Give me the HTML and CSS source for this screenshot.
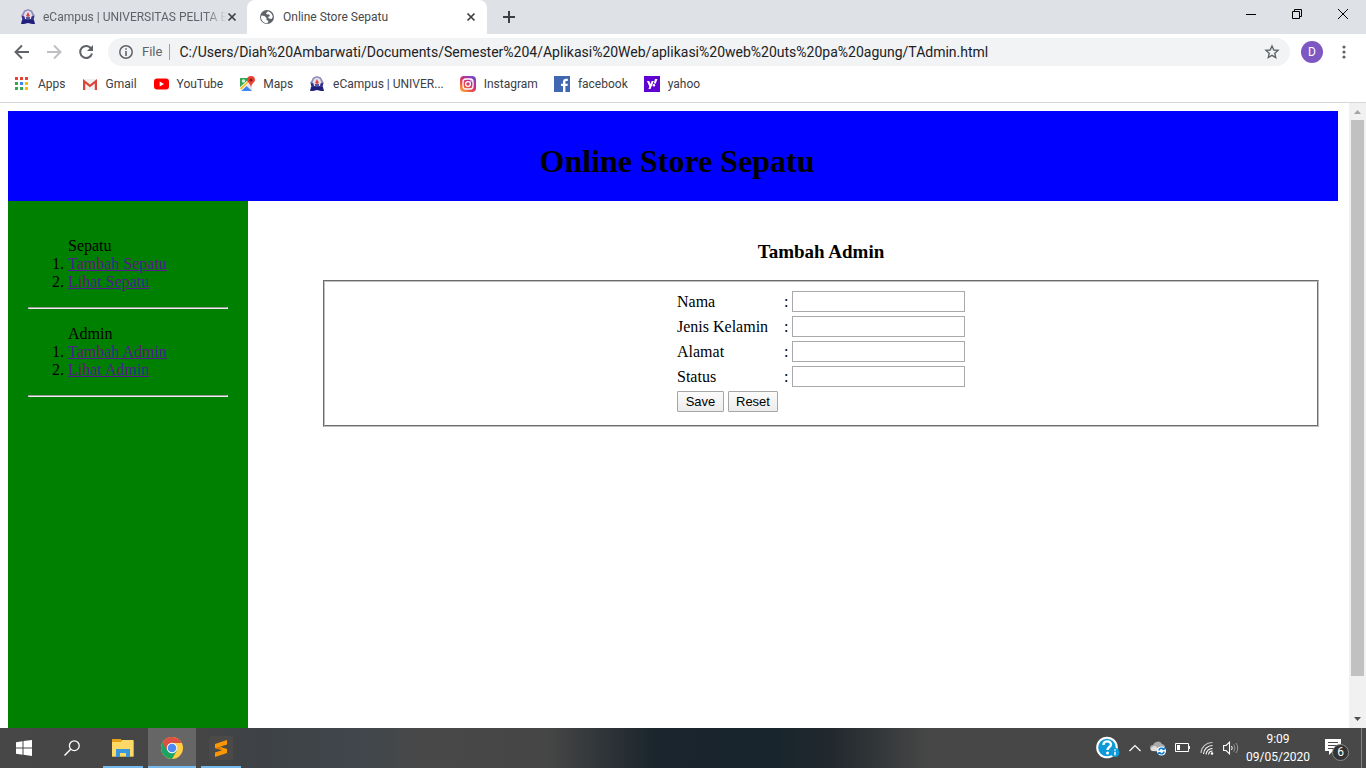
FILE: index.html
```html
<!DOCTYPE html>
<html lang="id">
<head>
<meta charset="utf-8">
<title>Online Store Sepatu</title>
<link rel="stylesheet" href="styles.css">
</head>
<body>
<svg class="symbols" aria-hidden="true">
  <symbol id="crest" viewBox="0 0 16 16">
    <path d="M8 0l4 1.500 2.500 5L13 11H3L1.500 6.500 4 1.500z" fill="#8f8db8"/>
    <path d="M8 1.500l3 1.500 1.500 4-1.500 3H5L3.500 7 5 3z" fill="#e4e1f1"/>
    <path d="M8 3l1 2 1 2-2 1-2-1 1-2z" fill="#d9483f"/>
    <path d="M1.500 6.500l3 1L5 10h6l.5-2.500 3-1-1 5h-11z" fill="#35328a"/>
    <path d="M6 8h4v2.500H6z" fill="#5b58a8"/>
    <path d="M2 11h12l1 4h-3l-4-1-4 1H1z" fill="#20207c"/>
  </symbol>
  <symbol id="close" viewBox="0 0 10 10"><path d="M1.500 1.500l7 7m0-7l-7 7" stroke="#3c4043" stroke-width="1.700"/></symbol>
</svg>

<header class="browser">
  <div class="tabs">
    <div class="tab">
      <svg class="icon" viewBox="0 0 16 16"><use href="#crest"/></svg>
      <span class="tab-title fade">eCampus | UNIVERSITAS PELITA B</span>
      <button class="tab-close" aria-label="Close tab"><svg width="10" height="10"><use href="#close"/></svg></button>
    </div>
    <div class="tab active">
      <svg class="icon" viewBox="0 0 16 16"><circle cx="8" cy="8" r="7" fill="#5f6368"/><path d="M2.500 6.500l3 .5 2 2v2l2 1-1 2.300C5 14.500 2 11.500 2 8zM9 2.200l-2 2 1 1.300 2-.3 1 1.800-2 1 1 1.500 2.500.5 1.300-2C13.500 5 11.500 2.700 9 2.200z" fill="#fff"/></svg>
      <span class="tab-title">Online Store Sepatu</span>
      <button class="tab-close" aria-label="Close tab"><svg width="10" height="10"><use href="#close"/></svg></button>
    </div>
    <button class="new-tab" aria-label="New tab"><svg width="12" height="12" viewBox="0 0 12 12"><path d="M6 0v12M0 6h12" stroke="#3c4043" stroke-width="2"/></svg></button>
    <div class="window-buttons">
      <button aria-label="Minimize"><svg width="10" height="10" viewBox="0 0 10 10"><path d="M0 5.500h10" stroke="#000"/></svg></button>
      <button aria-label="Restore"><svg width="10" height="10" viewBox="0 0 10 10"><path d="M.5 2.500h7v7h-7zM2.500 2.500v-2h7v7h-2" fill="none" stroke="#000"/></svg></button>
      <button aria-label="Close"><svg width="10" height="10" viewBox="0 0 10 10"><path d="M0 0l10 10M10 0L0 10" stroke="#000"/></svg></button>
    </div>
  </div>

  <div class="toolbar">
    <button aria-label="Back"><svg width="16" height="16" viewBox="0 0 16 16"><path d="M15 8H2.500M8 1.500L1.500 8 8 14.500" fill="none" stroke="#5f6368" stroke-width="1.900"/></svg></button>
    <button aria-label="Forward"><svg width="16" height="16" viewBox="0 0 16 16"><path d="M1 8h12.500M8 1.500L14.500 8 8 14.500" fill="none" stroke="#bdbfc2" stroke-width="1.900"/></svg></button>
    <button aria-label="Reload"><svg width="16" height="16" viewBox="0 0 16 16"><path d="M13.300 4.800A6 6 0 1 0 14 9.500" fill="none" stroke="#5f6368" stroke-width="2"/><path d="M15 1v6H9z" fill="#5f6368"/></svg></button>
    <div class="address">
      <svg class="info" width="14" height="14" viewBox="0 0 14 14"><circle cx="7" cy="7" r="6.200" fill="none" stroke="#5f6368" stroke-width="1.500"/><path d="M7 3.200v1.600M7 6v5" stroke="#5f6368" stroke-width="1.600"/></svg>
      <span class="scheme">File</span>
      <input class="url" type="text" aria-label="Address" value="C:/Users/Diah%20Ambarwati/Documents/Semester%204/Aplikasi%20Web/aplikasi%20web%20uts%20pa%20agung/TAdmin.html">
      <button class="star" aria-label="Bookmark this page"><svg width="16" height="16" viewBox="0 0 16 16"><path d="M8 2l1.800 4 4.200.4-3.200 2.900.9 4.200L8 11.300l-3.700 2.200.9-4.200L2 6.400 6.200 6z" fill="none" stroke="#5f6368" stroke-width="1.400"/></svg></button>
    </div>
    <button class="avatar" aria-label="Profile">D</button>
    <button class="menu" aria-label="Menu"><svg width="4" height="14" viewBox="0 0 4 14"><g fill="#5f6368"><circle cx="2" cy="2" r="1.600"/><circle cx="2" cy="7" r="1.600"/><circle cx="2" cy="12" r="1.600"/></g></svg></button>
  </div>

  <nav class="bookmarks" aria-label="Bookmarks">
    <a href="#"><svg class="icon" viewBox="0 0 16 16"><path d="M1 1h3v3H1zM6 1h3v3H6zM11 1h3v3h-3z" fill="#ea4335"/><path d="M1 6h3v3H1zM1 11h3v3H1zM6 11h3v3H6z" fill="#34a853"/><path d="M6 6h3v3H6z" fill="#4285f4"/><path d="M11 6h3v3h-3zM11 11h3v3h-3z" fill="#fbbc05"/></svg>Apps</a>
    <a href="#"><svg class="icon" viewBox="0 0 16 16"><path d="M1 3h14v11H1z" fill="#f1f1f1"/><path d="M1 14V3l7 5.500L15 3v11h-2.200V7.500L8 11.300 3.200 7.500V14z" fill="#db4437"/></svg>Gmail</a>
    <a href="#"><svg class="icon" viewBox="0 0 16 16"><rect x="1" y="2.500" width="15" height="11" rx="3" fill="#f00"/><path d="M6.700 5.500v5L11 8z" fill="#fff"/></svg>YouTube</a>
    <a href="#"><svg class="icon" viewBox="0 0 16 16"><path d="M1 2h12v13H1z" fill="#34a853"/><path d="M1 14L13 3v12H2z" fill="#e4e4e4"/><path d="M2 15l5.500-5 5.500 5z" fill="#4285f4"/><path d="M0 12L10 3l2 2L2 15H1z" fill="#fff"/><path d="M1 12L10 4l1 1L2 14z" fill="#fbc02d"/><circle cx="4.500" cy="5" r="1.700" fill="#d7f0dc"/><path d="M12 0a4 4 0 0 1 4 4c0 2-3 3-4 7-1-4-4-5-4-7a4 4 0 0 1 4-4z" fill="#ea4335"/><circle cx="12" cy="4" r="1.500" fill="#8b1a14"/></svg>Maps</a>
    <a href="#"><svg class="icon" viewBox="0 0 16 16"><use href="#crest"/></svg>eCampus | UNIVER...</a>
    <a href="#"><svg class="icon" viewBox="0 0 16 16"><defs><linearGradient id="ig" x1="0" y1="1" x2=".8" y2="0"><stop offset="0" stop-color="#fdc34b"/><stop offset=".35" stop-color="#f2573b"/><stop offset=".65" stop-color="#c92c88"/><stop offset="1" stop-color="#6c4bd0"/></linearGradient></defs><rect width="16" height="16" rx="4" fill="url(#ig)"/><rect x="3" y="3" width="10" height="10" rx="3" fill="none" stroke="#fff" stroke-width="1.300"/><circle cx="8" cy="8" r="2.400" fill="none" stroke="#fff" stroke-width="1.300"/><circle cx="11" cy="5" r=".8" fill="#fff"/></svg>Instagram</a>
    <a href="#"><svg class="icon" viewBox="0 0 16 16"><path d="M0 0h16v16H0z" fill="#4267b2"/><path d="M9 16v-6H7V7.700h2V6c0-2.300 1.200-3.300 3.200-3.300h1.600v2.200h-1.200c-1 0-1.200.4-1.200 1.200v1.600h2.400l-.3 2.300h-2.100v6z" fill="#fff"/></svg>facebook</a>
    <a href="#"><svg class="icon" viewBox="0 0 16 16"><path d="M0 0h16v16H0z" fill="#5f01d1"/><path d="M3 5h2.200l1.300 3L7.700 5h2.100l-3.300 8H4.400l1-2.300zM11 3h2.400l-1.600 4.500H9.800z" fill="#fff"/><circle cx="9.900" cy="9.300" r="1.200" fill="#fff"/></svg>yahoo</a>
  </nav>
</header>

<div class="viewport">
  <div class="page">
    <header class="banner"><h1>Online Store Sepatu</h1></header>
    <div class="columns">
      <nav class="sidebar">
        <ol>Sepatu
          <li><a href="#">Tambah Sepatu</a></li>
          <li><a href="#">Lihat Sepatu</a></li>
        </ol>
        <hr>
        <ol>Admin
          <li><a href="#">Tambah Admin</a></li>
          <li><a href="#">Lihat Admin</a></li>
        </ol>
        <hr>
      </nav>
      <main class="content">
        <h3>Tambah Admin</h3>
        <form>
          <fieldset>
            <table class="form-table">
              <tr><td class="label"><label for="nama">Nama</label></td><td class="colon">:</td><td><input id="nama" type="text"></td></tr>
              <tr><td class="label"><label for="jenis">Jenis Kelamin</label></td><td class="colon">:</td><td><input id="jenis" type="text"></td></tr>
              <tr><td class="label"><label for="alamat">Alamat</label></td><td class="colon">:</td><td><input id="alamat" type="text"></td></tr>
              <tr><td class="label"><label for="status">Status</label></td><td class="colon">:</td><td><input id="status" type="text"></td></tr>
              <tr><td colspan="3"><div class="actions"><button type="button">Save</button><button type="reset">Reset</button></div></td></tr>
            </table>
          </fieldset>
        </form>
      </main>
    </div>
  </div>
  <div class="scrollbar" aria-hidden="true">
    <svg width="17" height="17" viewBox="0 0 17 17"><path d="M5 11l3.500-4 3.500 4z" fill="#a3a3a3"/></svg>
    <div class="track"><div class="thumb"></div></div>
    <svg width="17" height="17" viewBox="0 0 17 17"><path d="M5 6l3.500 4L12 6z" fill="#505050"/></svg>
  </div>
</div>

<footer class="taskbar">
  <div class="apps">
    <button aria-label="Start"><svg width="16" height="16" viewBox="0 0 16 16"><path d="M0 2.200l6.500-.9v6.200H0zM7.500 1.100L16 0v7.500H7.500zM0 8.500h6.500v6.200L0 13.800zM7.500 8.500H16V16l-8.500-1.200z" fill="#fff"/></svg></button>
    <button aria-label="Search"><svg width="16" height="16" viewBox="0 0 16 16"><circle cx="10.300" cy="5.700" r="4.900" fill="none" stroke="#fff" stroke-width="1.300"/><path d="M6.700 9.300L.5 15.500" stroke="#fff" stroke-width="1.400"/></svg></button>
    <button class="running first" aria-label="File Explorer"><svg width="22" height="20" viewBox="0 0 22 20"><path d="M0 1h9l1 2h11.500v15.500H0z" fill="#e3a21a"/><path d="M0 4h9l1-2h11.500v16.500H0z" fill="#ffd966"/><path d="M4 19v-8h14v8h-4v-4H8v4z" fill="#3a96dd"/></svg></button>
    <button class="running current" aria-label="Google Chrome"><svg width="22" height="22" viewBox="0 0 22 22"><circle cx="11" cy="11" r="11" fill="#ffcd46"/><path d="M11 11L1.500 5.500A11 11 0 0 0 11 22l4.800-8.300z" fill="#1da462"/><path d="M11 6h9.800A11 11 0 0 0 1.500 5.500l5 8.500z" fill="#dd5144"/><circle cx="11" cy="11" r="5.200" fill="#fff"/><circle cx="11" cy="11" r="4.300" fill="#4c8bf5"/></svg></button>
    <button class="running" aria-label="Sublime Text"><svg width="24" height="24" viewBox="0 0 24 24"><rect width="24" height="24" rx="2" fill="#4b4a48"/><path d="M6 8l12-4v4.500l-7 2.200 7 2.300v4L6 21v-4.500l7-2.200-7-2.300z" fill="#ff9800"/><path d="M6 12l12 4-5-1.700-2-3.600z" fill="#d97706"/></svg></button>
  </div>
  <div class="tray">
    <svg width="24" height="24" viewBox="0 0 24 24"><circle cx="11" cy="11.500" r="9.800" fill="#0d9ad8" stroke="#fff" stroke-width="2"/><path d="M7.500 9c0-5 7.500-4.500 7.500-.5 0 2.500-3.500 2.500-3.500 5.500" fill="none" stroke="#fff" stroke-width="2.400"/><circle cx="11.500" cy="17" r="1.500" fill="#fff"/><circle cx="19" cy="16.500" r="4.500" fill="#0d9ad8"/><path d="M19 13.300v1.400M19 15.800v3.500" stroke="#fff" stroke-width="1.500"/></svg>
    <svg width="12" height="8" viewBox="0 0 12 8"><path d="M.5 7L6 1.500 11.500 7" fill="none" stroke="#fff" stroke-width="1.200"/></svg>
    <svg width="16" height="16" viewBox="0 0 16 16"><path d="M3 11a3 3 0 0 1 0-6 5 5 0 0 1 9-1 3.500 3.500 0 0 1 2 6z" fill="#a9a9a9"/><path d="M2 11a2.500 2.500 0 0 1 1-4.500c2-1 4 0 5 2l2 3z" fill="#ddd"/><circle cx="11.500" cy="11" r="4.500" fill="#fff"/><path d="M8.800 10.500a3 3 0 0 1 5-1.500M14.200 11.500a3 3 0 0 1-5 1.500" fill="none" stroke="#0078d7" stroke-width="1.400"/><path d="M14.800 7v3h-3zM8.200 15v-3h3z" fill="#0078d7"/></svg>
    <svg width="16" height="10" viewBox="0 0 16 10"><path d="M.5.500h13v8H.5zM14.500 3v3" fill="none" stroke="#fff"/><path d="M2 2h3v5H2z" fill="#fff"/></svg>
    <svg width="14" height="14" viewBox="0 0 14 14"><g fill="none" stroke="#fff" stroke-width="1.100"><path d="M1 12A11 11 0 0 1 12.500 1.500" opacity=".7"/><path d="M3.500 13A9 9 0 0 1 12.500 4.500M6 13.500A7 7 0 0 1 12.500 7.500M8.500 13.500a4 4 0 0 1 4-3.500"/></g><circle cx="12" cy="12.500" r="1.300" fill="#fff"/></svg>
    <svg width="16" height="14" viewBox="0 0 16 14"><path d="M.6 4.500h2.500L6.500 1.200v11.600L3.100 9.500H.6z" fill="none" stroke="#fff" stroke-width="1.100"/><path d="M8.500 5q1.500 2 0 4" fill="none" stroke="#fff"/><path d="M10.700 3.500q2.600 3.500 0 7M13 2q3.500 5 0 10" fill="none" stroke="#9a9a9a"/></svg>
    <div class="clock"><span>9:09</span><span>09/05/2020</span></div>
    <button class="notifications" aria-label="6 notifications"><svg width="16" height="16" viewBox="0 0 16 16"><path d="M0 0h16v12H8l-4 4v-4H0z" fill="#fff"/><path d="M3 3.500h10M3 6.500h10M3 9.500h6" stroke="#484848"/></svg><span class="count">6</span></button>
    <div class="peek"></div>
  </div>
</footer>
</body>
</html>
```

FILE: styles.css
```css
* { box-sizing: border-box; }

body {
  margin: 0;
  height: 100vh;
  display: flex;
  flex-direction: column;
  overflow: hidden;
  background: #fff;
}

svg { display: block; flex: none; }
.symbols { position: absolute; width: 0; height: 0; }
.icon { width: 16px; height: 16px; }

/* Browser frame */
.browser {
  flex: none;
  font: 12px/16px Roboto, "Noto Sans", sans-serif;
  color: #3c4043;
  border-bottom: 1px solid #d5d7da;
}
.browser button, .taskbar button {
  border: 0;
  padding: 0;
  background: none;
  font: inherit;
  color: inherit;
  display: flex;
  align-items: center;
  justify-content: center;
}

.tabs { display: flex; height: 34px; background: #dee1e6; }
.tab {
  width: 240px;
  display: flex;
  align-items: center;
  padding: 0 11px 0 12px;
}
.tab .icon { margin-right: 8px; }
.tab:first-child { margin-left: 8px; }
.tab:first-child .icon { margin-right: 7px; }
.tab.active { margin-left: -1px; background: #fff; border-radius: 8px 8px 0 0; }
.tab-title { flex: 1; min-width: 0; white-space: nowrap; color: #45494d; }
.tab-title.fade { -webkit-mask-image: linear-gradient(to right, #000 88%, transparent); mask-image: linear-gradient(to right, #000 88%, transparent); color: #5f6368; }
.tab-close { flex: none; width: 10px; }
.browser .new-tab { width: 28px; margin-left: 8px; }
.window-buttons { display: flex; margin-left: auto; height: 28px; }
.window-buttons button { width: 46px; }

.toolbar { display: flex; align-items: center; height: 36px; padding: 0 14px; gap: 16px; }
.address {
  flex: 1;
  display: flex;
  align-items: center;
  height: 28px;
  margin-left: -2px;
  padding: 0 10px 0 11px;
  border-radius: 14px;
  background: #f1f3f4;
}
.scheme {
  margin-left: 9px;
  padding-right: 7px;
  border-right: 1px solid #9aa0a6;
  font-size: 13px;
  color: #5f6368;
}
.url {
  flex: 1;
  min-width: 0;
  padding: 0 0 0 9px;
  border: 0;
  outline: 0;
  background: none;
  font: 14px/18px Roboto, "Noto Sans", sans-serif;
  color: #202124;
}
.browser .avatar {
  width: 22px;
  height: 22px;
  margin-left: -5px;
  border-radius: 50%;
  background: #7e57c2;
  color: #fff;
}
.browser .menu { width: 16px; margin-left: -3px; }

.bookmarks { display: flex; align-items: center; height: 32px; padding: 0 14px 4px; gap: 16px; }
.bookmarks a { display: flex; align-items: center; gap: 8px; color: inherit; text-decoration: none; white-space: nowrap; }

/* Store page */
.viewport { flex: 1; min-height: 0; display: flex; }
.page {
  flex: 1;
  display: flex;
  flex-direction: column;
  padding: 8px 11px 0 8px;
  font: 16px/18px "Liberation Serif", "Times New Roman", serif;
  color: #000;
}
.banner { background: #00f; padding: 32px 0 22px 8px; text-align: center; }
.banner h1 { margin: 0; font-size: 32px; line-height: 36px; }
.columns { flex: 1; display: flex; }
.sidebar { width: 240px; padding: 20px; background: #008000; }
.sidebar ol { margin: 16px 0; padding-left: 40px; }
.sidebar a { color: #551a8b; }
.sidebar hr { margin: 0; border: 1px solid #eee; border-top-color: #9a9a9a; border-left-color: #9a9a9a; }
.content { flex: 1; padding: 40px 19px 0 75px; }
.content h3 { margin: 0 0 18px; font-size: 19px; line-height: 21px; text-align: center; }
.content fieldset { margin: 0; border: 2px groove #c0c0c0; padding: 7px 12px 11px; }

.form-table { margin: 0 auto; border-collapse: collapse; }
.form-table td { height: 25px; padding: 0; vertical-align: middle; }
.form-table .label { width: 107px; }
.form-table .colon { width: 8px; }
.form-table input {
  display: block;
  width: 173px;
  height: 21px;
  padding: 1px 2px;
  border: 1px solid #a9a9a9;
  font: 13px "Liberation Sans", Arial, sans-serif;
}
.actions { display: flex; gap: 4px; }
.actions button {
  min-width: 47px;
  height: 21px;
  padding: 0 7px;
  border: 1px solid #a6a6a6;
  border-radius: 1px;
  background: linear-gradient(#fbfbfb, #ececec);
  font: 13px/18px "Liberation Sans", Arial, sans-serif;
  color: #000;
}

.scrollbar { width: 17px; display: flex; flex-direction: column; background: #f1f1f1; }
.track { flex: 1; padding: 0 2px; }
.thumb { height: 94%; background: #c1c1c1; }

/* Taskbar */
.taskbar {
  flex: none;
  height: 40px;
  display: flex;
  justify-content: space-between;
  color: #fff;
  font: 12px/18px Roboto, "Noto Sans", sans-serif;
  background: linear-gradient(to right, #484747 0, #454545 14%, #3e4246 19%, #40464b 26%, #484848 31%, #464646 40%, #1a252d 48%, #19252c 57%, #22292e 61%, #474747 68%, #484848 100%);
}
.apps { display: flex; gap: 1px; }
.taskbar .apps button { width: 48px; }
.taskbar .apps button:nth-child(2) { margin-left: -1px; }
.taskbar .apps .running {
  background: linear-gradient(#76b9ed, #76b9ed) center bottom / 40px 2px no-repeat;
}
.taskbar .apps .first { margin-left: 2px; }
.taskbar .apps .current { background-color: #666; background-size: 100% 2px; }
.tray { display: flex; align-items: center; gap: 9px; padding-right: 4px; }
.clock { display: flex; flex-direction: column; align-items: center; width: 60px; }
.notifications { position: relative; width: 24px; height: 26px; margin: 0 3px 0 8px; }
.taskbar .notifications { align-items: flex-start; justify-content: flex-start; padding-top: 4px; }
.count {
  position: absolute;
  right: 0;
  bottom: 0;
  width: 17px;
  height: 17px;
  border: 1px solid #8a8a8a;
  border-radius: 50%;
  background: #333;
  line-height: 15px;
  text-align: center;
}
.peek { width: 1px; height: 40px; background: #828282; }
```
